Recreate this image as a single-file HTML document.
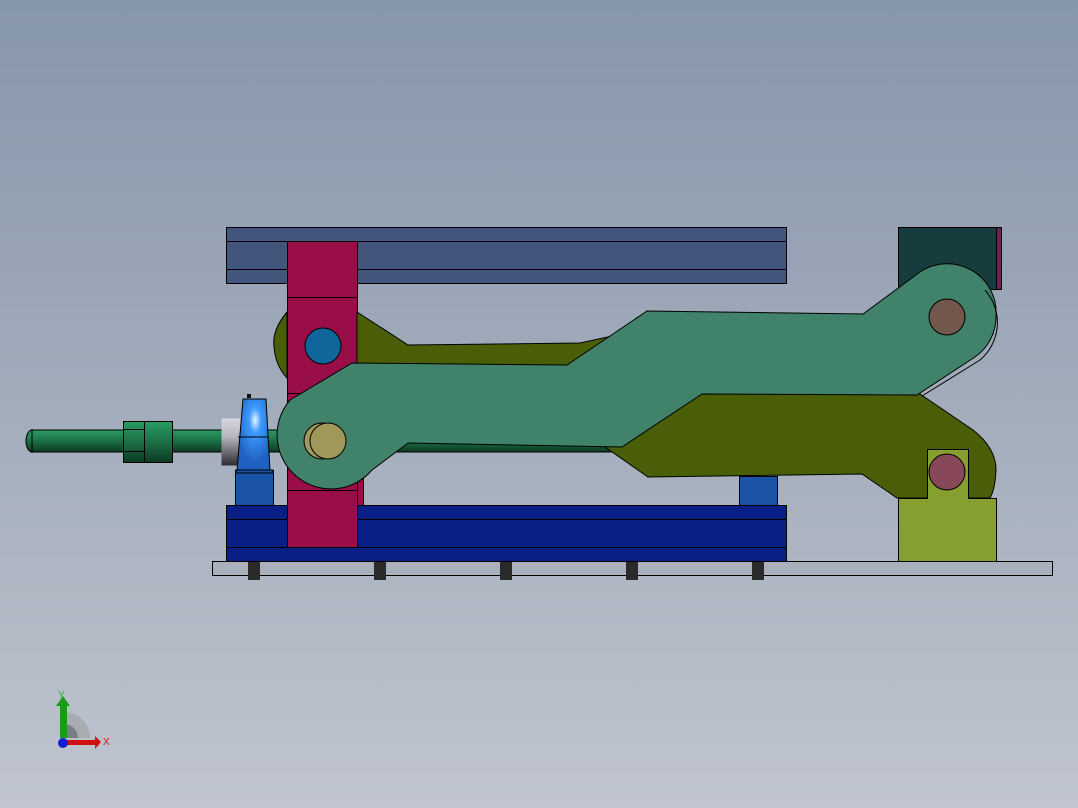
<!DOCTYPE html>
<html><head><meta charset="utf-8"><style>
html,body{margin:0;padding:0;width:1078px;height:808px;overflow:hidden}
svg{display:block}
</style></head><body>
<svg width="1078" height="808" viewBox="0 0 1078 808" xmlns="http://www.w3.org/2000/svg">
<defs>
<linearGradient id="bg" x1="0" y1="0" x2="0" y2="1">
<stop offset="0" stop-color="#8696ab"/><stop offset="0.5" stop-color="#a2acbb"/><stop offset="1" stop-color="#c0c5cf"/>
</linearGradient>
<linearGradient id="rod" x1="0" y1="0" x2="0" y2="1">
<stop offset="0" stop-color="#2a9a62"/><stop offset="0.4" stop-color="#1f7a4c"/><stop offset="1" stop-color="#0c3a22"/>
</linearGradient>
<linearGradient id="col" x1="0" y1="0" x2="0" y2="1">
<stop offset="0" stop-color="#d9d7e0"/><stop offset="0.4" stop-color="#b4b2ba"/><stop offset="1" stop-color="#2e2c30"/>
</linearGradient>
<radialGradient id="brg" cx="0.55" cy="0.3" r="0.6">
<stop offset="0" stop-color="#e8f4ff"/><stop offset="0.3" stop-color="#3d9bff"/><stop offset="1" stop-color="#1f60c0"/>
</radialGradient>
</defs>
<rect width="1078" height="808" fill="url(#bg)"/>
<g stroke="#000" stroke-width="1">
<rect x="226.5" y="227.5" width="560" height="56" fill="#42557d"/>
<line x1="226" y1="241.5" x2="786" y2="241.5"/>
<line x1="226" y1="269.5" x2="786" y2="269.5"/>
<rect x="898.5" y="227.5" width="98" height="62" fill="#173c3d"/>
<rect x="996.5" y="227.5" width="5" height="62" fill="#6b2258"/>
<rect x="212.5" y="561.5" width="840" height="14" fill="#abb1bc"/>
<g fill="#2a2a2a" stroke="none">
<rect x="248" y="562" width="12" height="18"/><rect x="374" y="562" width="12" height="18"/><rect x="500" y="562" width="12" height="18"/><rect x="626" y="562" width="12" height="18"/><rect x="752" y="562" width="12" height="18"/>
</g>
<rect x="226.5" y="505.5" width="560" height="56" fill="#0a1f85"/>
<line x1="226" y1="519.5" x2="786" y2="519.5"/>
<line x1="226" y1="547.5" x2="786" y2="547.5"/>
<rect x="235.5" y="470.5" width="38" height="35" fill="#1b54a6"/>
<rect x="739.5" y="476.5" width="38" height="29" fill="#1b54a6"/>
<rect x="357.5" y="393.5" width="6" height="112" fill="#990d48"/>
<rect x="287.5" y="241.5" width="70" height="306" fill="#990d48"/>
<line x1="287" y1="297.5" x2="357" y2="297.5"/>
<line x1="287" y1="393.5" x2="357" y2="393.5"/>
<line x1="287" y1="490.5" x2="357" y2="490.5"/>
<path d="M287,312 Q272,330 274,346 Q275,365 287,378 Z" fill="#4a5e08"/>
<path d="M357,312 L408,345 L580,343 L640,330 L640,380 L357,380 Z" fill="#4a5e08"/>
<circle cx="323" cy="346" r="18" fill="#10669a"/>
<path d="M32,430 L620,430 L620,452 L32,452 A6,11 0 0 1 32,430 Z" fill="url(#rod)"/>
<line x1="32" y1="429" x2="32" y2="453"/>
<rect x="123.5" y="421.5" width="49" height="41" fill="url(#rod)"/>
<line x1="144.5" y1="421" x2="144.5" y2="462"/>
<line x1="123" y1="429.5" x2="144" y2="429.5"/>
<line x1="123" y1="451.5" x2="144" y2="451.5"/>
<rect x="221.5" y="418.5" width="19" height="47" fill="url(#col)" stroke="none"/>
<path d="M243,399 L266,399 L270,470 L237,470 Z" fill="url(#brg)"/>
<line x1="238" y1="437" x2="268" y2="437"/>
<rect x="236" y="470" width="37" height="3" fill="#1b54a6"/>
<rect x="247" y="394" width="4" height="4" fill="#111" stroke="none"/>
<path d="M600,445 L702,394 L920,394 L973,430 Q996,448 996,470 Q995,490 990,498 L897,498 L862,474 L648,477 L605,447 Z" fill="#4a5e08"/>
<path d="M352,363 L567,365 L647,311 L863,314 L920,272 A49,49 0 0 1 996,317 A49,49 0 0 1 975,357 L917,395 L702,394 L622,447 L408,443 L372,470 A50,50 0 1 1 290,400 Z" fill="#41826a"/>
<path d="M985,290 A49,49 0 0 1 980,360 L922,396" fill="none"/>
<circle cx="322" cy="441" r="18" fill="#a0975a"/>
<circle cx="328" cy="441" r="18" fill="#a0975a"/>
<circle cx="947" cy="317" r="18" fill="#72574c"/>
<path d="M898.5,498.5 L927.5,498.5 L927.5,449.5 L968.5,449.5 L968.5,498.5 L996.5,498.5 L996.5,561.5 L898.5,561.5 Z" fill="#85a02f"/>
<circle cx="947" cy="472" r="18" fill="#89475a"/>
</g>
<g>
<path d="M64,712 A26,26 0 0 1 90,738 L64,738 Z" fill="#a8abb0"/>
<path d="M64,724 A14,14 0 0 1 78,738 L64,738 Z" fill="#7a7d82"/>
<rect x="60" y="704" width="7" height="34" fill="#1a9a1a"/>
<path d="M56,706 L63,696 L70,706 Z" fill="#1a9a1a"/>
<rect x="64" y="740" width="32" height="5" fill="#d01010"/>
<path d="M95,736 L101,742 L95,749 Z" fill="#d01010"/>
<circle cx="63" cy="743" r="5" fill="#1020d0"/>
<text x="58" y="698" font-family="Liberation Sans, sans-serif" font-size="10" fill="#20c020">Y</text>
<text x="103" y="745" font-family="Liberation Sans, sans-serif" font-size="10" fill="#e01010">X</text>
</g>
</svg>
</body></html>
